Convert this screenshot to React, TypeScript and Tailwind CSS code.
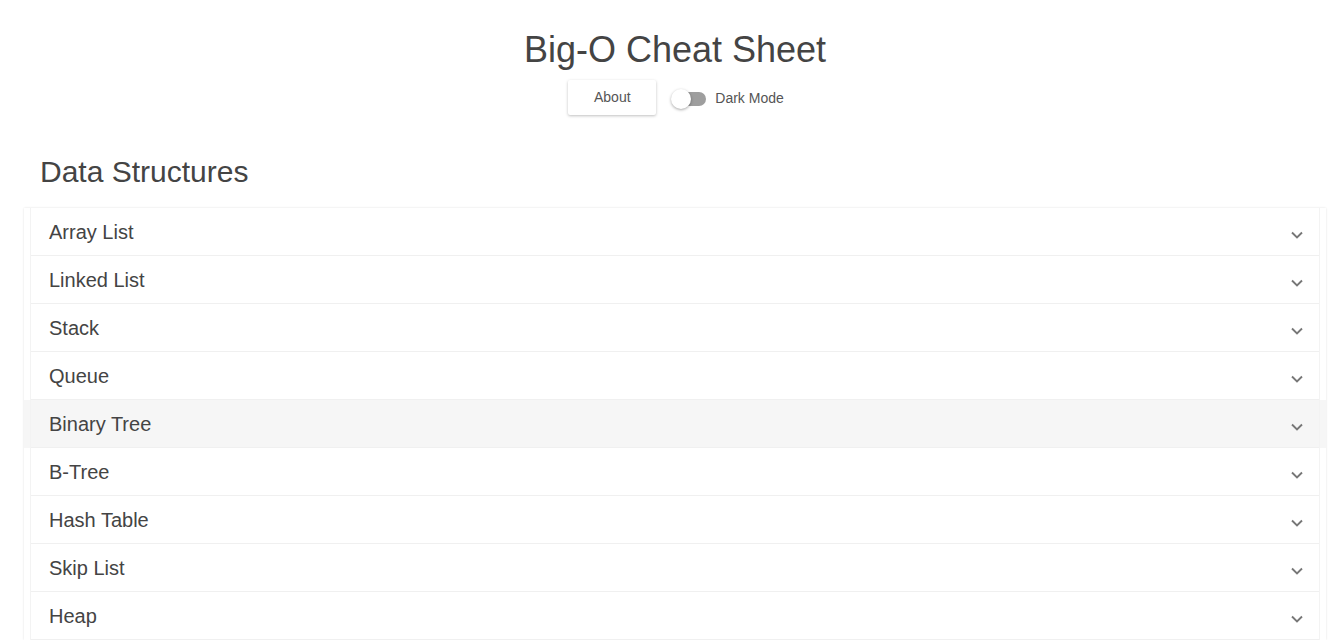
import React from "react";

const items = [
  "Array List",
  "Linked List",
  "Stack",
  "Queue",
  "Binary Tree",
  "B-Tree",
  "Hash Table",
  "Skip List",
  "Heap",
];

function Chevron() {
  return (
    <svg width="14" height="10" viewBox="0 0 14 10" className="mt-[6px]">
      <path d="M2 2.5 7 7.5 12 2.5" fill="none" stroke="#777" strokeWidth="1.9" />
    </svg>
  );
}

export default function App() {
  return (
    <div className="w-full h-[640px] overflow-hidden bg-white">
      <div className="w-[1350px] text-[#444] font-['Liberation_Sans',Arial,sans-serif]">
        <div className="flex flex-col items-center pt-[27px]">
          <h1 className="text-[36px] leading-[46px] font-normal text-[#444]">Big-O Cheat Sheet</h1>
          <div className="flex items-center mt-[7px] ml-[2px]">
            <button className="w-[88px] h-[35px] bg-white text-[14px] text-[#555] shadow-[0_1px_3px_rgba(0,0,0,0.25)] rounded-[2px]">
              About
            </button>
            <div className="flex items-center ml-[15px] mt-[2px]">
              <div className="relative w-[36px] h-[20px]">
                <div className="absolute left-[1px] top-[3px] w-[34px] h-[14px] rounded-full bg-[#9e9e9e]" />
                <div className="absolute left-0 top-0 w-[20px] h-[20px] rounded-full bg-white shadow-[0_1px_3px_rgba(0,0,0,0.35)]" />
              </div>
              <span className="ml-[8px] text-[14px] text-[#555]">Dark Mode</span>
            </div>
          </div>
        </div>
        <h2 className="ml-[40px] mt-[39px] text-[30px] leading-[36px] font-normal text-[#444]">Data Structures</h2>
        <div className="mx-[24px] mt-[18px] shadow-[0_0_2px_rgba(0,0,0,0.12)]">
          {items.map((name) => (
            <div key={name} className={name === "Binary Tree" ? "bg-[#f6f6f6]" : "bg-white"}>
              <div className="mx-[7px] h-[48px] flex items-center justify-between pl-[18px] pr-[15px] border-b border-[#f0f0f0] shadow-[1px_0_0_#f3f3f3,-1px_0_0_#f3f3f3]">
                <span className="text-[20px] text-[#444]">{name}</span>
                <Chevron />
              </div>
            </div>
          ))}
        </div>
      </div>
    </div>
  );
}
